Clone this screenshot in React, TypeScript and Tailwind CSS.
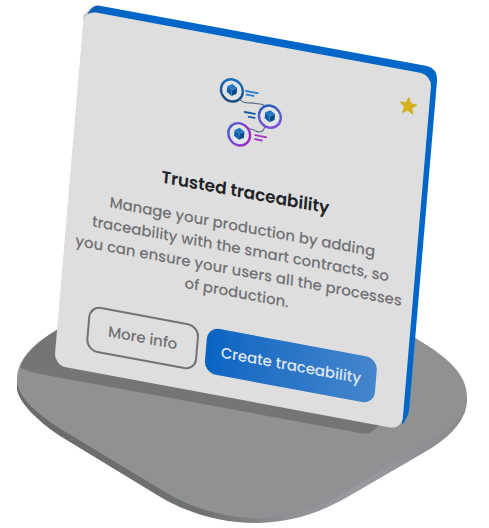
import React from "react";

function Stand() {
  return (
    <svg
      viewBox="0 0 489 528"
      className="col-start-1 row-start-1 w-[489px] max-w-none"
      aria-hidden="true"
    >
      <defs>
        <linearGradient id="rim" x1="0" y1="0" x2="1" y2="0">
          <stop offset="0" stopColor="#696b6a" />
          <stop offset="0.42" stopColor="#707272" />
          <stop offset="0.6" stopColor="#8f9093" />
          <stop offset="0.75" stopColor="#9a9b9e" />
          <stop offset="1" stopColor="#88898b" />
        </linearGradient>
        <linearGradient id="side" x1="88" y1="0" x2="108" y2="0" gradientUnits="userSpaceOnUse">
          <stop offset="0" stopColor="#0a5cb4" />
          <stop offset="1" stopColor="#0067c8" />
        </linearGradient>
      </defs>
      <path
        d="M17 378V390C20 403 36 420 60 436L162 498C194 516 225 523 258 523C292 522 318 513 344 499L430 449C455 433 467 417 467 399L460 380Z"
        fill="url(#rim)"
      />
      <path
        d="M60 328C32 344 17 360 17 380C17 396 36 414 64 431L165 492C197 511 228 518 260 518C292 517 318 508 344 493L424 445C452 429 467 414 467 397C467 373 446 356 412 336L240 240Z"
        fill="#909193"
      />
      <path
        d="M60 328C38 341 25 354 20 367Q26 371 40 374L360 433Q367 435 371 432L380 425L400 380L240 260Z"
        fill="#747576"
      />
      <path d="M83 20L84 15L91 8Q94 5 99 5L110 20Z" fill="#bdc1c5" />
      <path
        d="M88 13L92 8Q95 5 101 6L427 66Q438 69 437 81L409 411Q408 416 403 424L370 390L100 40Z"
        fill="url(#side)"
      />
    </svg>
  );
}

function Cube({ x, y }: { x: number; y: number }) {
  return (
    <g transform={`translate(${x} ${y})`}>
      <path d="M0 -6L5 -3L0 0L-5 -3Z" fill="#2378c4" />
      <path d="M-5 -3L0 0V6L-5 3Z" fill="#0f62b0" />
      <path d="M5 -3L0 0V6L5 3Z" fill="#0b4889" />
      <path d="M0 0L5 -3M0 0V6" stroke="#5f9bd3" strokeWidth="0.4" />
    </g>
  );
}

function ChainIcon() {
  return (
    <svg width="72" height="72" viewBox="0 0 72 72" fill="none" aria-hidden="true">
      <defs>
        <linearGradient id="ringA" x1="0" y1="0" x2="0" y2="1">
          <stop offset="0" stopColor="#1a6fc0" />
          <stop offset="1" stopColor="#164a80" />
        </linearGradient>
        <linearGradient id="ringB" x1="0" y1="0" x2="0.3" y2="1">
          <stop offset="0" stopColor="#1f62b8" />
          <stop offset="1" stopColor="#7a50d4" />
        </linearGradient>
        <linearGradient id="ringC" x1="0" y1="0" x2="1" y2="0.3">
          <stop offset="0" stopColor="#4560d0" />
          <stop offset="1" stopColor="#a02cc8" />
        </linearGradient>
      </defs>
      <path d="M23 24C30 28 32 24 38 24.500C44 25 46 22 48 27" stroke="#47647e" strokeWidth="1" />
      <path d="M33 52C37 48 40 53 45 52C49 51 49 49 50 45" stroke="#47647e" strokeWidth="1" />
      <circle cx="14" cy="16" r="11" fill="#e3e4e6" stroke="url(#ringA)" strokeWidth="2.400" />
      <circle cx="54" cy="35" r="11" fill="#e3e4e6" stroke="url(#ringB)" strokeWidth="2.400" />
      <circle cx="25" cy="58" r="11" fill="#e3e4e6" stroke="url(#ringC)" strokeWidth="2.400" />
      <Cube x={14} y={15.5} />
      <Cube x={54} y={34.5} />
      <Cube x={25} y={57.5} />
      <g strokeWidth="1.800" strokeLinecap="round">
        <path d="M28 14H40M29 17.500H36" stroke="#2e7dcb" />
        <path d="M28.500 35H39M33 39H39" stroke="#145a9c" />
        <path d="M41 56H52M41 60H48" stroke="#a63ac8" />
      </g>
    </svg>
  );
}

function Star() {
  return (
    <svg width="18" height="18" viewBox="0 0 24 24" fill="#d3b01c" stroke="#d3b01c" strokeLinejoin="round" aria-hidden="true">
      <path d="M12 17.800L18.900 22L17.100 14.100L23.200 8.800L15.100 8.100L12 0.600L8.900 8.100L0.800 8.800L6.900 14.100L5.100 22Z" />
    </svg>
  );
}

export default function App() {
  return (
    <main className="grid justify-center overflow-hidden bg-white font-['Poppins','Inter',sans-serif]">
      <Stand />
      <article className="relative col-start-1 row-start-1 mt-[42px] mr-1 flex w-[352px] flex-col items-center self-start justify-self-center rounded-xl bg-[#dedede] pt-9 pb-5 rotate-[4.85deg] skew-y-[5.65deg]">
        <button type="button" aria-label="Favourite" className="absolute top-[26px] right-3">
          <Star />
        </button>
        <ChainIcon />
        <h2 className="mt-[30px] text-[17px] leading-6 font-semibold text-[#222326]">
          Trusted traceability
        </h2>
        <p className="mt-3 px-1 text-center text-[15px] leading-[22px] font-medium text-[#727275]">
          Manage your production by adding
          <br />
          traceability with the smart contracts, so
          <br />
          you can ensure your users all the processes
          <br />
          of production.
        </p>
        <div className="mt-7 flex gap-2">
          <button
            type="button"
            className="h-[46px] w-28 rounded-xl border-2 border-[#727275] text-[15px] font-medium text-[#727275]"
          >
            More info
          </button>
          <button
            type="button"
            className="h-[46px] w-[172px] rounded-xl bg-linear-to-r from-[#0664c2] to-[#4486cb] text-[15px] font-medium text-[#dfe6ee]"
          >
            Create traceability
          </button>
        </div>
      </article>
    </main>
  );
}
